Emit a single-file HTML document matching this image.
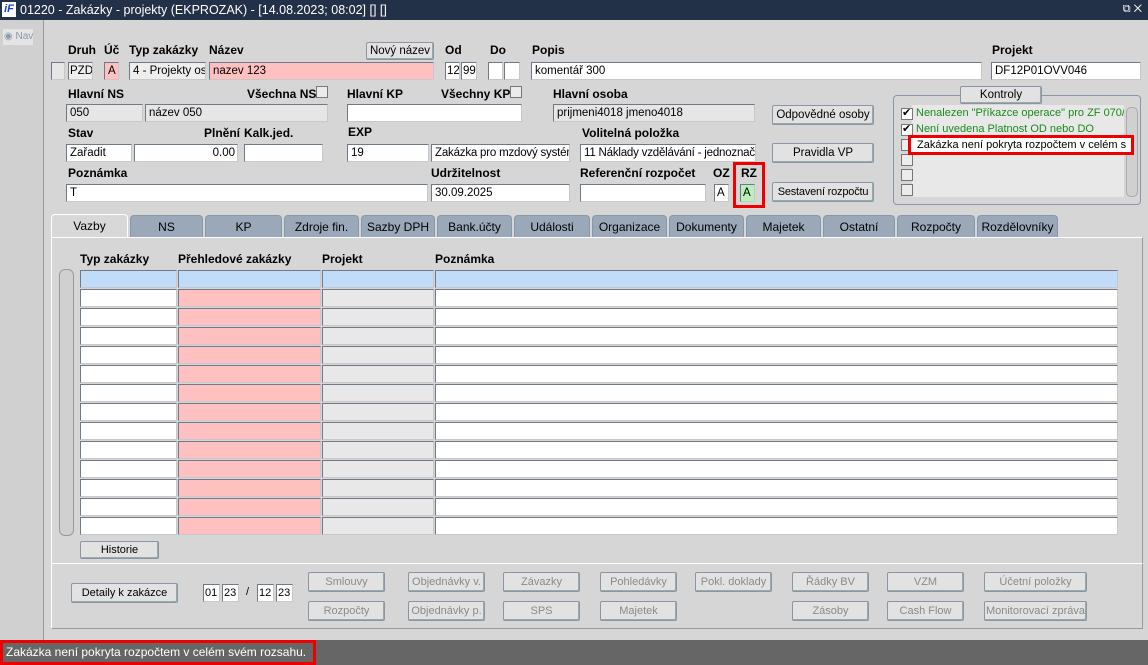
<!DOCTYPE html>
<html><head><meta charset="utf-8"><style>
*{box-sizing:border-box;margin:0;padding:0}
body{width:1148px;height:665px;overflow:hidden;background:#d6d6d6;font-family:"Liberation Sans",sans-serif;font-size:12px;color:#000;position:relative}
.a{position:absolute;white-space:nowrap}
.l{position:absolute;font-weight:bold;font-size:12px;white-space:nowrap}
.i{position:absolute;height:18px;background:#fff;border:1px solid #6e7a88;border-right-color:#c8c8c8;border-bottom-color:#c8c8c8;font-size:11.5px;line-height:16px;padding-left:3px;white-space:nowrap;overflow:hidden}
.g{background:#e6e6e6}
.p{background:#ffc0c0}
.b{position:absolute;height:20px;background:#e2e2e2;border:1px solid #8a96a6;border-radius:2px;font-size:11.5px;line-height:18px;text-align:center;box-shadow:inset -1px -1px 0 #9aa;white-space:nowrap;overflow:hidden}
.d{color:#8a8a8a;font-size:11px}
.t{position:absolute;top:215px;height:22px;background:#9aa8ba;border:1px solid #8898ac;border-bottom:none;border-radius:4px 4px 0 0;text-align:center;line-height:22px;font-size:12px;white-space:nowrap}
.cb{position:absolute;width:12px;height:12px;border:1px solid #777;background:#ececec}
</style></head><body>
<div class="a" style="left:0;top:0;width:1148px;height:20px;background:#223048;color:#fff;font-size:12.5px;line-height:20px;padding-left:20px">01220 - Zakázky - projekty (EKPROZAK) - [14.08.2023; 08:02] [] []</div>
<div class="a" style="left:2px;top:2px;width:14px;height:15px;background:#fff;color:#1b3bd0;font-weight:bold;font-style:italic;font-size:11px;line-height:15px;text-align:center">iF</div>
<div class="a" style="right:6px;top:3px;color:#fff;font-size:11px">⧉ ✕</div>
<div class="a" style="left:0;top:20px;width:44px;height:620px;background:#d0d0d0;border-right:1px solid #9a9a9a"></div>
<div class="a" style="left:3px;top:29px;width:30px;height:16px;background:#e4e4e4;color:#8a9aaa;font-size:10px;line-height:16px;padding-left:1px">◉ Nav</div>

<div class="l" style="left:68px;top:43px">Druh</div><div class="l" style="left:104px;top:43px">Úč</div><div class="l" style="left:129px;top:43px">Typ zakázky</div><div class="l" style="left:209px;top:43px">Název</div>
<div class="b" style="left:366px;top:42px;width:68px;height:18px;line-height:16px">Nový název</div>
<div class="l" style="left:445px;top:43px">Od</div><div class="l" style="left:490px;top:43px">Do</div><div class="l" style="left:532px;top:43px">Popis</div><div class="l" style="left:992px;top:43px">Projekt</div>
<div class="i g" style="left:51px;top:62px;width:14px"></div>
<div class="i" style="left:68px;top:62px;width:25px;background:#eee;padding-left:1px">PZD</div>
<div class="i p" style="left:104px;top:62px;width:15px">A</div>
<div class="i" style="left:129px;top:62px;width:77px;background:#eee">4 - Projekty ost</div>
<div class="i p" style="left:209px;top:62px;width:225px">nazev 123</div>
<div class="i" style="left:445px;top:62px;width:15px;padding-left:1px">12</div><div class="i" style="left:461px;top:62px;width:16px;padding-left:1px">99</div>
<div class="i" style="left:488px;top:62px;width:15px"></div><div class="i" style="left:504px;top:62px;width:16px"></div>
<div class="i" style="left:531px;top:62px;width:451px">komentář 300</div>
<div class="i" style="left:991px;top:62px;width:150px">DF12P01OVV046</div>

<div class="l" style="left:68px;top:87px">Hlavní NS</div><div class="l" style="left:247px;top:87px">Všechna NS</div><div class="cb" style="left:316px;top:86px"></div>
<div class="l" style="left:347px;top:87px">Hlavní KP</div><div class="l" style="left:441px;top:87px">Všechny KP</div><div class="cb" style="left:510px;top:86px"></div>
<div class="l" style="left:553px;top:87px">Hlavní osoba</div>
<div class="i g" style="left:66px;top:104px;width:77px">050</div><div class="i g" style="left:145px;top:104px;width:183px">název 050</div>
<div class="i" style="left:347px;top:104px;width:175px"></div>
<div class="i g" style="left:553px;top:104px;width:202px">prijmeni4018 jmeno4018</div>
<div class="b" style="left:772px;top:105px;width:102px">Odpovědné osoby</div>

<div class="l" style="left:68px;top:126px">Stav</div><div class="l" style="left:204px;top:126px">Plnění</div><div class="l" style="left:244px;top:126px">Kalk.jed.</div><div class="l" style="left:348px;top:125px">EXP</div><div class="l" style="left:582px;top:126px">Volitelná položka</div>
<div class="i" style="left:66px;top:144px;width:66px">Zařadit</div>
<div class="i" style="left:134px;top:144px;width:104px;text-align:right;padding-right:2px">0.00</div>
<div class="i" style="left:244px;top:144px;width:79px"></div>
<div class="i" style="left:347px;top:144px;width:82px">19</div>
<div class="i" style="left:431px;top:144px;width:139px;letter-spacing:-0.2px">Zakázka pro mzdový systém</div>
<div class="i" style="left:580px;top:144px;width:176px;letter-spacing:-0.2px">11 Náklady vzdělávání - jednoznačně</div>
<div class="b" style="left:772px;top:143px;width:102px">Pravidla VP</div>

<div class="l" style="left:68px;top:166px">Poznámka</div><div class="l" style="left:431px;top:166px">Udržitelnost</div><div class="l" style="left:580px;top:166px">Referenční rozpočet</div><div class="l" style="left:713px;top:166px">OZ</div><div class="l" style="left:741px;top:166px">RZ</div>
<div class="i" style="left:66px;top:184px;width:362px">T</div>
<div class="i" style="left:431px;top:184px;width:139px">30.09.2025</div>
<div class="i" style="left:580px;top:184px;width:126px"></div>
<div class="i" style="left:714px;top:184px;width:15px;padding-left:2px">A</div>
<div class="i" style="left:740px;top:184px;width:15px;background:#b8f0b8;padding-left:2px">A</div>
<div class="a" style="left:733px;top:162px;width:32px;height:46px;border:3px solid #e00"></div>
<div class="b" style="left:772px;top:182px;width:102px;font-size:11px;letter-spacing:-0.2px">Sestavení rozpočtu</div>

<div class="a" style="left:893px;top:95px;width:248px;height:110px;border:1px solid #8a96a6;border-radius:4px"></div>
<div class="b" style="left:960px;top:86px;width:82px;height:18px;line-height:16px">Kontroly</div>
<div class="a" style="left:912px;top:105px;width:212px;height:92px;background:#e8e8e8"></div>
<div class="a" style="left:1126px;top:107px;width:12px;height:90px;background:#d0d0d0;border:1px solid #aaa;border-radius:5px"></div>
<div class="cb" style="left:901px;top:108px;background:#fff;font-size:11px;line-height:9px">✔</div><div class="a" style="left:916px;top:107px;color:#1a8a1a;font-size:11px;width:208px;overflow:hidden">Nenalezen "Příkazce operace" pro ZF 070/</div>
<div class="cb" style="left:901px;top:124px;background:#fff;font-size:11px;line-height:9px">✔</div><div class="a" style="left:916px;top:123px;color:#1a8a1a;font-size:11px">Není uvedena Platnost OD nebo DO</div>
<div class="cb" style="left:901px;top:139px"></div><div class="cb" style="left:901px;top:154px"></div><div class="cb" style="left:901px;top:169px"></div><div class="cb" style="left:901px;top:184px"></div>
<div class="a" style="left:908px;top:135px;width:226px;height:20px;border:3px solid #e00;background:#fff;font-size:11px;line-height:14px;padding-left:6px;overflow:hidden">Zakázka není pokryta rozpočtem v celém s</div>

<div class="t" style="left:51px;width:77px;background:#d8d8d8;top:214px;height:24px;border-color:#fff">Vazby</div>
<div class="t" style="left:130px;width:73px">NS</div><div class="t" style="left:205px;width:77px">KP</div><div class="t" style="left:284px;width:75px">Zdroje fin.</div><div class="t" style="left:361px;width:74px">Sazby DPH</div><div class="t" style="left:437px;width:75px">Bank.účty</div><div class="t" style="left:514px;width:76px">Události</div><div class="t" style="left:592px;width:75px">Organizace</div><div class="t" style="left:669px;width:75px">Dokumenty</div><div class="t" style="left:746px;width:75px">Majetek</div><div class="t" style="left:823px;width:72px">Ostatní</div><div class="t" style="left:897px;width:78px">Rozpočty</div><div class="t" style="left:977px;width:81px">Rozdělovníky</div>
<div class="a" style="left:51px;top:237px;width:1092px;height:327px;border:1px solid #fff;border-right-color:#999;border-bottom-color:#999"></div>
<div class="l" style="left:80px;top:252px">Typ zakázky</div><div class="l" style="left:178px;top:252px">Přehledové zakázky</div><div class="l" style="left:322px;top:252px">Projekt</div><div class="l" style="left:435px;top:252px">Poznámka</div>
<div class="a" style="left:59px;top:269px;width:15px;height:267px;background:#d0d0d0;border:1px solid #999;border-radius:6px"></div>
<div id="grid"></div>
<script>
var h='';for(var r=0;r<14;r++){var y=270+r*19;var c=r==0?['#c0dcf8','#c0dcf8','#c0dcf8','#c0dcf8']:['#fff','#ffc0c0','#e8e8e8','#fff'];var xs=[80,178,322,435],ws=[97,143,112,683];for(var k=0;k<4;k++)h+='<div class="i" style="left:'+xs[k]+'px;top:'+y+'px;width:'+ws[k]+'px;background:'+c[k]+'"></div>';}
document.getElementById('grid').innerHTML=h;
</script>
<div class="b" style="left:80px;top:541px;width:79px;height:18px;line-height:16px;font-size:11px">Historie</div>

<div class="a" style="left:51px;top:563px;width:1092px;height:66px;border:1px solid #fff;border-right-color:#999;border-bottom-color:#999"></div>
<div class="b" style="left:71px;top:583px;width:107px;font-size:11px">Detaily k zakázce</div>
<div class="i" style="left:203px;top:584px;width:17px;padding-left:1px;font-size:11px">01</div><div class="i" style="left:222px;top:584px;width:17px;padding-left:1px;font-size:11px">23</div>
<div class="a" style="left:246px;top:586px;font-size:11px">/</div>
<div class="i" style="left:257px;top:584px;width:17px;padding-left:1px;font-size:11px">12</div><div class="i" style="left:276px;top:584px;width:17px;padding-left:1px;font-size:11px">23</div>
<div class="b d" style="left:308px;top:572px;width:77px">Smlouvy</div><div class="b d" style="left:408px;top:572px;width:77px">Objednávky v.</div><div class="b d" style="left:503px;top:572px;width:77px">Závazky</div><div class="b d" style="left:600px;top:572px;width:77px">Pohledávky</div><div class="b d" style="left:695px;top:572px;width:77px">Pokl. doklady</div><div class="b d" style="left:792px;top:572px;width:77px">Řádky BV</div><div class="b d" style="left:887px;top:572px;width:77px">VZM</div><div class="b d" style="left:984px;top:572px;width:103px">Účetní položky</div>
<div class="b d" style="left:308px;top:601px;width:77px">Rozpočty</div><div class="b d" style="left:408px;top:601px;width:77px">Objednávky p.</div><div class="b d" style="left:503px;top:601px;width:77px">SPS</div><div class="b d" style="left:600px;top:601px;width:77px">Majetek</div><div class="b d" style="left:792px;top:601px;width:77px">Zásoby</div><div class="b d" style="left:887px;top:601px;width:77px">Cash Flow</div><div class="b d" style="left:984px;top:601px;width:103px">Monitorovací zpráva</div>

<div class="a" style="left:0;top:640px;width:1148px;height:25px;background:#666"></div>
<div class="a" style="left:0;top:640px;width:316px;height:25px;border:3px solid #e00;color:#fff;font-size:12px;line-height:19px;padding-left:3px">Zakázka není pokryta rozpočtem v celém svém rozsahu.</div>
</body></html>
